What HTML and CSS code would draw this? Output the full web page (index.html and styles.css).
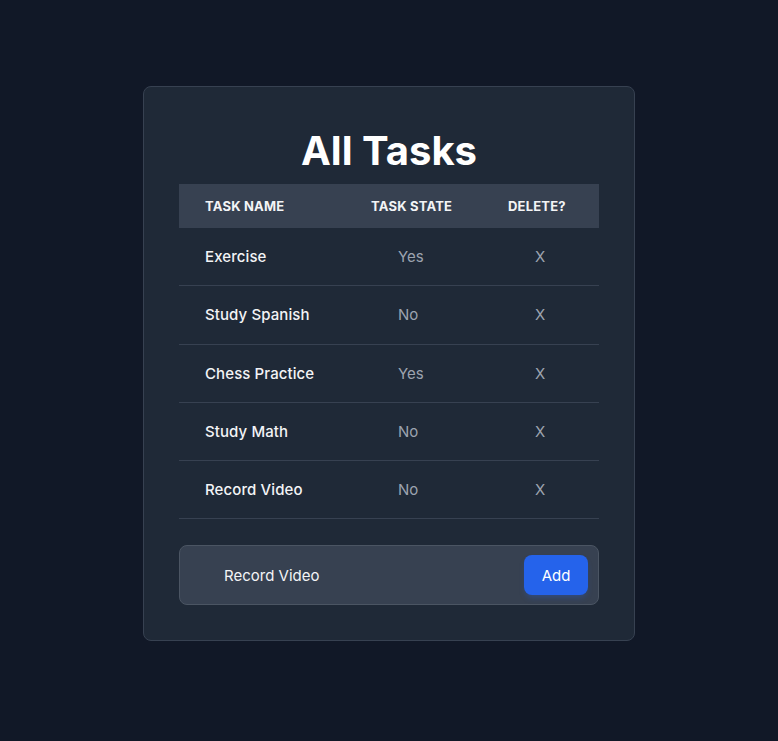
FILE: index.html
```html
<!DOCTYPE html>
<html>
<head>
<meta charset="utf-8">
<link rel="stylesheet" href="styles.css">
</head>
<body>
<main class="card">
  <h1 class="title">All Tasks</h1>
  <table class="tasks">
    <thead>
      <tr><th class="c1">Task Name</th><th class="c2">Task State</th><th class="c3">Delete?</th></tr>
    </thead>
    <tbody>
      <tr><td class="name">Exercise</td><td class="state">Yes</td><td class="del">X</td></tr>
      <tr><td class="name">Study Spanish</td><td class="state">No</td><td class="del">X</td></tr>
      <tr><td class="name">Chess Practice</td><td class="state">Yes</td><td class="del">X</td></tr>
      <tr><td class="name">Study Math</td><td class="state">No</td><td class="del">X</td></tr>
      <tr><td class="name">Record Video</td><td class="state">No</td><td class="del">X</td></tr>
    </tbody>
  </table>
  <form class="add-form">
    <input class="add-input" type="text" value="Record Video">
    <button class="add-btn" type="button">Add</button>
  </form>
</main>
</body>
</html>
```
FILE: styles.css
```css
* { box-sizing: border-box; }
html, body { margin: 0; padding: 0; }
body {
  background: #111827;
  font-family: Inter, "Noto Sans", sans-serif;
  color: #f3f4f6;
  min-height: 741px;
}
.card {
  width: 492px;
  margin: 86px auto 0;
  background: #1f2937;
  border: 1px solid #374151;
  border-radius: 8px;
  padding: 40px 35px 35px;
}
.title {
  margin: 0 0 9px;
  text-align: center;
  font-size: 40px;
  line-height: 48px;
  font-weight: 700;
  color: #ffffff;
}
.tasks {
  width: 420px;
  border-collapse: separate;
  border-spacing: 0;
  table-layout: fixed;
}
.tasks th {
  background: #374151;
  height: 44px;
  padding: 0 0 0 26px;
  text-align: left;
  font-size: 13px;
  font-weight: 700;
  text-transform: uppercase;
  letter-spacing: 0.2px;
  color: #f3f4f6;
}
.tasks th.c1 { width: 166px; }
.tasks th.c2 { width: 137px; }
.tasks td {
  height: 58.25px;
  border-bottom: 1px solid #374151;
  font-size: 15px;
  padding: 0;
}
.tasks td.name { padding-left: 26px; color: #f3f4f6; font-weight: 500; letter-spacing: 0.1px; }
.tasks td.state, .tasks td.del { padding-left: 53px; color: #9ca3af; }
.add-form {
  margin-top: 26px;
  display: flex;
  align-items: center;
  justify-content: space-between;
  height: 60px;
  background: #374151;
  border: 1px solid #4b5563;
  border-radius: 8px;
  padding: 0 10px 0 44px;
}
.add-input {
  flex: 1;
  background: transparent;
  border: none;
  outline: none;
  font-family: inherit;
  font-size: 15px;
  color: #f3f4f6;
  padding: 0;
}
.add-btn {
  width: 64px;
  height: 40px;
  background: #2563eb;
  border: none;
  border-radius: 8px;
  color: #ffffff;
  font-family: inherit;
  font-size: 15px;
  box-shadow: 0 4px 6px -2px rgba(37, 99, 235, 0.35);
}
```
